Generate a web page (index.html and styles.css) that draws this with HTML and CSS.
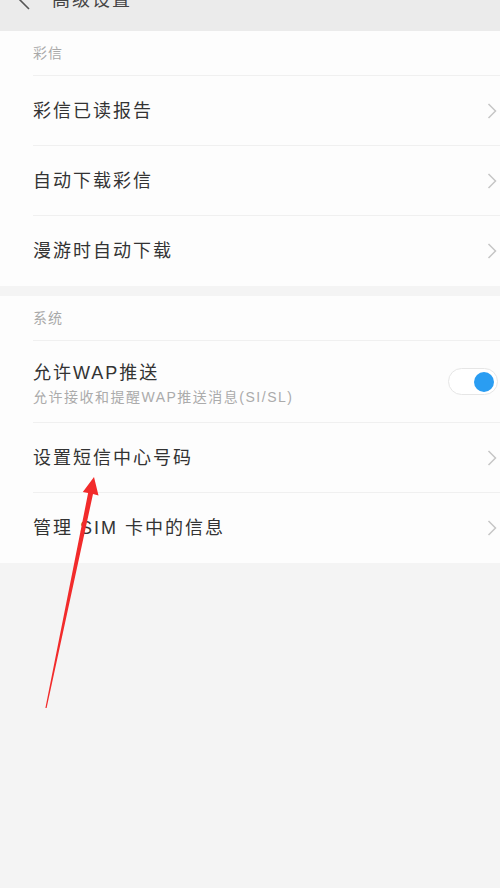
FILE: index.html
```html
<!DOCTYPE html>
<html lang="zh-CN">
<head>
<meta charset="utf-8">
<title>高级设置</title>
<link rel="stylesheet" href="styles.css">
</head>
<body>
<div class="screen">
  <header class="topbar">
    <svg class="back" width="14" height="20" viewBox="0 0 14 20"><polyline points="11,1 2,10 11,19" fill="none" stroke="#555" stroke-width="1.6"/></svg>
    <span class="title">高级设置</span>
  </header>

  <section class="group">
    <div class="group-label">彩信</div>
    <div class="row"><span class="row-title">彩信已读报告</span><svg class="chev" width="10" height="16" viewBox="0 0 10 16"><polyline points="1.5,1 8.5,8 1.5,15" fill="none" stroke="#c6c6c6" stroke-width="1.5"/></svg></div>
    <div class="row"><span class="row-title">自动下载彩信</span><svg class="chev" width="10" height="16" viewBox="0 0 10 16"><polyline points="1.5,1 8.5,8 1.5,15" fill="none" stroke="#c6c6c6" stroke-width="1.5"/></svg></div>
    <div class="row last"><span class="row-title">漫游时自动下载</span><svg class="chev" width="10" height="16" viewBox="0 0 10 16"><polyline points="1.5,1 8.5,8 1.5,15" fill="none" stroke="#c6c6c6" stroke-width="1.5"/></svg></div>
  </section>

  <section class="group">
    <div class="group-label">系统</div>
    <div class="row tall">
      <div class="row-text">
        <span class="row-title">允许WAP推送</span>
        <span class="row-sub">允许接收和提醒WAP推送消息(SI/SL)</span>
      </div>
      <span class="toggle"><span class="knob"></span></span>
    </div>
    <div class="row"><span class="row-title">设置短信中心号码</span><svg class="chev" width="10" height="16" viewBox="0 0 10 16"><polyline points="1.5,1 8.5,8 1.5,15" fill="none" stroke="#c6c6c6" stroke-width="1.5"/></svg></div>
    <div class="row last"><span class="row-title">管理 SIM 卡中的信息</span><svg class="chev" width="10" height="16" viewBox="0 0 10 16"><polyline points="1.5,1 8.5,8 1.5,15" fill="none" stroke="#c6c6c6" stroke-width="1.5"/></svg></div>
  </section>

  <svg class="annotation" width="500" height="888" viewBox="0 0 500 888">
    <polygon points="94,477 98.5,495.5 93,494.1 46.6,708.1 45.4,707.9 88.1,493.1 82.8,492" fill="#f22b2b"/>
  </svg>
</div>
</body>
</html>
```

FILE: styles.css
```css
html, body {
  margin: 0;
  padding: 0;
  background: #f4f4f4;
}
body {
  font-family: "Liberation Sans", "Noto Sans CJK SC", sans-serif;
  color: #333;
}
.screen {
  position: relative;
  width: 500px;
  height: 888px;
  overflow: hidden;
  background: #f4f4f4;
}
.topbar {
  height: 62px;
  margin-top: -31px;
  background: #ebebeb;
  display: flex;
  align-items: center;
  padding-left: 18px;
  gap: 20px;
}
.back {
  display: block;
}
.title {
  font-size: 18px;
  letter-spacing: 2px;
  color: #444;
  line-height: 24px;
}
.group {
  background: #fdfdfd;
  margin-bottom: 10px;
}
.group-label {
  height: 45px;
  box-sizing: border-box;
  margin-left: 33px;
  padding-top: 14px;
  font-size: 14px;
  line-height: 16px;
  letter-spacing: 1px;
  color: #a9a9a9;
  border-bottom: 1px solid #f0f0f0;
}
.row {
  height: 70px;
  box-sizing: border-box;
  margin-left: 33px;
  padding-right: 3px;
  display: flex;
  align-items: center;
  justify-content: space-between;
  border-bottom: 1px solid #f0f0f0;
}
.row.last {
  border-bottom: none;
}
.row.tall {
  height: 82px;
  padding-top: 6px;
  padding-right: 2px;
}
.row-title {
  font-size: 18px;
  line-height: 24px;
  letter-spacing: 2px;
  color: #333;
}
.row-text {
  display: flex;
  flex-direction: column;
}
.row-sub {
  font-size: 14px;
  line-height: 24px;
  letter-spacing: 1.5px;
  color: #ababab;
}
.chev {
  display: block;
}
.toggle {
  position: relative;
  width: 50px;
  height: 27px;
  box-sizing: border-box;
  border: 1px solid #e6e6e6;
  border-radius: 14px;
  background: #fff;
  margin-bottom: 6px;
}
.knob {
  position: absolute;
  right: 3px;
  top: 2.5px;
  width: 20px;
  height: 20px;
  border-radius: 50%;
  background: #2a9df2;
}
.annotation {
  position: absolute;
  left: 0;
  top: 0;
  pointer-events: none;
}
```
